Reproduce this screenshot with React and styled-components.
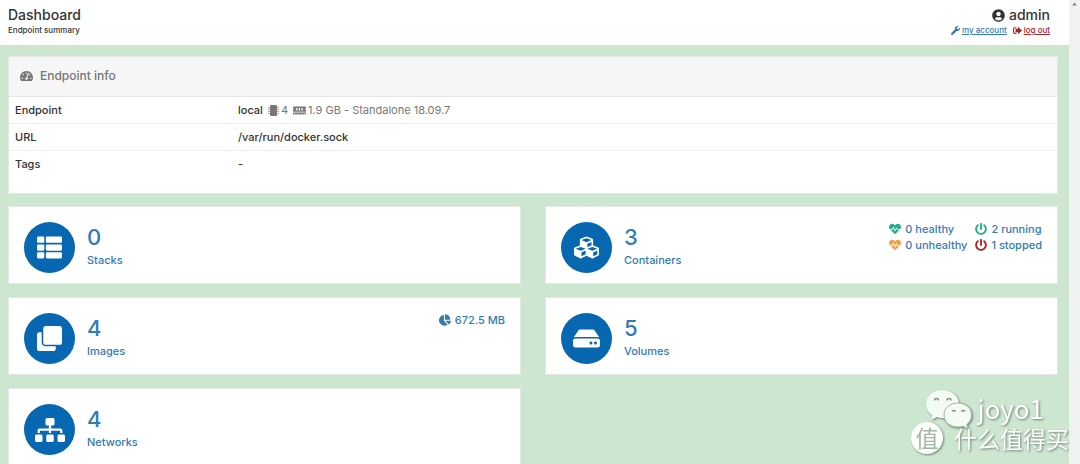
import React from "react";
import styled, { createGlobalStyle } from "styled-components";
import {
  FaChartPie,
  FaClone,
  FaCubes,
  FaHdd,
  FaHeartbeat,
  FaMemory,
  FaMicrochip,
  FaPowerOff,
  FaSitemap,
  FaTachometerAlt,
  FaThList,
  FaUserCircle,
  FaWrench,
} from "react-icons/fa";

const GlobalStyle = createGlobalStyle`
  * {
    box-sizing: border-box;
  }

  body {
    margin: 0;
    font-family: Inter, "Noto Sans CJK SC", sans-serif;
    font-size: 11px;
    font-weight: 500;
    line-height: 16px;
    color: #333;
  }
`;

const Shell = styled.div`
  display: flex;
  height: 100vh;
  overflow: hidden;
`;

const Page = styled.div`
  flex: 1;
  min-width: 0;
  overflow: hidden;
  background-color: #cde6d0;
`;

const ScrollTrack = styled.div`
  width: 11px;
  padding-top: 2px;
  background-color: #f0f1f2;
  display: flex;
  justify-content: center;
`;

const ScrollArrow = styled.svg`
  width: 5px;
  height: 4px;
  fill: #8a8a8a;
`;

const Header = styled.header`
  display: flex;
  justify-content: space-between;
  padding: 6px 19px 9px 8px;
  background-color: #fff;
`;

const Title = styled.h1`
  margin: 0;
  font-size: 14px;
  font-weight: 500;
  line-height: 18px;
`;

const Subtitle = styled.div`
  font-size: 8px;
  line-height: 12px;
`;

const UserBox = styled.div`
  text-align: right;
`;

const UserName = styled.div`
  display: flex;
  justify-content: flex-end;
  align-items: center;
  gap: 4px;
  font-size: 14px;
  line-height: 18px;
`;

const UserLinks = styled.div`
  display: flex;
  justify-content: flex-end;
  gap: 6px;
  font-size: 8px;
  line-height: 12px;
`;

const UserLink = styled.a`
  display: flex;
  align-items: center;
  gap: 2px;
  color: ${(props) => props.$color};
  text-decoration: underline;

  svg {
    width: 9px;
    height: 9px;
  }
`;

const Content = styled.main`
  display: flex;
  flex-direction: column;
  gap: 12px;
  padding: 11px 11px 12px 8px;
`;

const Panel = styled.section`
  padding-bottom: 16px;
  border: 1px solid #e3e9e2;
  background-color: #fff;
`;

const PanelTitle = styled.h2`
  display: flex;
  align-items: center;
  gap: 7px;
  margin: 0;
  padding: 9px 11px 10px;
  border-bottom: 1px solid #e6e6e6;
  background-color: #f6f6f6;
  color: #777;
  font-size: 12px;
  font-weight: 500;
  line-height: 20px;

  svg {
    width: 13px;
    height: 12px;
  }
`;

const InfoTable = styled.table`
  width: 100%;
  border-collapse: collapse;
  table-layout: fixed;
  font-size: 11px;
`;

const Row = styled.tr`
  & + & {
    border-top: 1px solid #efefef;
  }
`;

const Label = styled.th`
  width: 222px;
  padding: 5px 6px;
  font-weight: 500;
  text-align: left;
`;

const Value = styled.td`
  padding: 5px 7px;
`;

const Specs = styled.span`
  margin-left: 5px;
  color: #777;
  font-weight: 400;

  svg {
    width: ${(props) => props.$iconWidth}px;
    height: 11px;
    margin-right: 2px;
    vertical-align: -2px;
  }
`;

const Cards = styled.div`
  display: grid;
  grid-template-columns: 1fr 1fr;
  gap: 13px 24px;
`;

const Card = styled.a`
  display: flex;
  align-items: flex-start;
  gap: 12px;
  padding: 13px 15px 10px;
  border: 1px solid #e3e9e2;
  background-color: #fff;
  color: #337ab7;
  text-decoration: none;
`;

const Circle = styled.span`
  display: flex;
  align-items: center;
  justify-content: center;
  width: 51px;
  height: 51px;
  margin-top: 2px;
  border-radius: 50%;
  background-color: #0767b0;
  color: #fff;

  svg {
    width: ${(props) => props.$iconSize}px;
    height: ${(props) => props.$iconSize}px;
  }
`;

const CardText = styled.span`
  flex: 1;
  display: flex;
  flex-direction: column;
`;

const Count = styled.span`
  font-size: 22px;
  line-height: 34px;
`;

const CardName = styled.span`
  line-height: 13px;
`;

const Stats = styled.span`
  display: grid;
  grid-template-columns: repeat(${(props) => props.$columns}, auto);
  column-gap: 8px;
  padding-top: 1px;
`;

const Stat = styled.span`
  display: flex;
  align-items: center;
  gap: 4px;

  svg {
    width: 12px;
    height: 12px;
    color: ${(props) => props.$color};
  }
`;

const Watermark = styled.div`
  position: fixed;
  right: 11px;
  bottom: 10px;
  display: flex;
  flex-direction: column;
  align-items: flex-end;
  color: #fff;
  font-family: "Noto Sans CJK SC", sans-serif;
  font-weight: 400;
  filter: drop-shadow(1px 1px 1px rgba(70, 90, 75, 0.7));
`;

const WatermarkName = styled.div`
  display: flex;
  align-items: center;
  gap: 5px;
  padding-right: 25px;
  font-size: 26px;
  line-height: 28px;

  svg {
    width: 48px;
    height: 40px;
    margin: -4px 0 -8px;
  }
`;

const WatermarkSite = styled.div`
  display: flex;
  align-items: center;
  gap: 11px;
  font-size: 23px;
  line-height: 32px;
`;

const Seal = styled.span`
  width: 32px;
  height: 32px;
  border-radius: 50%;
  background-color: #fff;
  color: #9fb9a3;
  font-size: 23px;
  line-height: 31px;
  text-align: center;
`;

const SignOutIcon = () => (
  <svg viewBox="0 0 16 16" fill="currentColor" aria-hidden="true">
    <path d="M6 2H3a3 3 0 0 0-3 3v6a3 3 0 0 0 3 3h3v-2H3a1 1 0 0 1-1-1V5a1 1 0 0 1 1-1h3z" />
    <path d="M9 1.500 16 8l-7 6.500V11H4.500V5H9z" />
  </svg>
);

const ChatIcon = () => (
  <svg viewBox="0 0 46 40" aria-hidden="true">
    <path
      fill="#f4fbf5"
      d="M16 0C7 0 0 6 0 14c0 5 2.500 9 6.500 11.500L5 30l6-3c2 .6 3.500 1 6 1 9 0 16-6 16-14S25 0 16 0z"
    />
    <path
      fill="#f4fbf5"
      stroke="#9fb5a3"
      strokeWidth="1"
      d="M32 13c-8 0-14 5-14 12s6 12 14 12c2 0 3.500-.3 5-.8l5 2.600-1.200-4.300C44 32 45.500 29 45.500 25c0-7-6-12-13.500-12z"
    />
    <g fill="none" stroke="#7d9482" strokeWidth="1.500">
      <path d="M8.500 10.500a2 2 0 0 1 4 0M21 10.500a2 2 0 0 1 4 0M26 21.500a2 2 0 0 1 3.500 0M35.500 21.500a2 2 0 0 1 3.500 0" />
    </g>
  </svg>
);

const cards = [
  { name: "Stacks", count: 0, icon: <FaThList />, iconSize: 25 },
  {
    name: "Containers",
    count: 3,
    icon: <FaCubes />,
    iconSize: 25,
    columns: 2,
    stats: [
      { text: "0 healthy", icon: <FaHeartbeat />, color: "#23ae89" },
      { text: "2 running", icon: <FaPowerOff />, color: "#23ae89" },
      { text: "0 unhealthy", icon: <FaHeartbeat />, color: "#f0a04b" },
      { text: "1 stopped", icon: <FaPowerOff />, color: "#ae2323" },
    ],
  },
  {
    name: "Images",
    count: 4,
    icon: <FaClone />,
    iconSize: 25,
    columns: 1,
    stats: [{ text: "672.5 MB", icon: <FaChartPie />, color: "#337ab7" }],
  },
  { name: "Volumes", count: 5, icon: <FaHdd />, iconSize: 27 },
  { name: "Networks", count: 4, icon: <FaSitemap />, iconSize: 30 },
];

const App = () => {
  return (
    <>
      <GlobalStyle />
      <Shell>
        <Page>
          <Header>
            <div>
              <Title>Dashboard</Title>
              <Subtitle>Endpoint summary</Subtitle>
            </div>
            <UserBox>
              <UserName>
                <FaUserCircle size={13} />
                admin
              </UserName>
              <UserLinks>
                <UserLink href="#account" $color="#337ab7">
                  <FaWrench />
                  my account
                </UserLink>
                <UserLink href="#logout" $color="#ae2323">
                  <SignOutIcon />
                  log out
                </UserLink>
              </UserLinks>
            </UserBox>
          </Header>

          <Content>
            <Panel>
              <PanelTitle>
                <FaTachometerAlt />
                Endpoint info
              </PanelTitle>
              <InfoTable>
                <tbody>
                  <Row>
                    <Label scope="row">Endpoint</Label>
                    <Value>
                      local
                      <Specs $iconWidth={11}>
                        <FaMicrochip />4
                      </Specs>
                      <Specs $iconWidth={13}>
                        <FaMemory />
                        1.9 GB - Standalone 18.09.7
                      </Specs>
                    </Value>
                  </Row>
                  <Row>
                    <Label scope="row">URL</Label>
                    <Value>/var/run/docker.sock</Value>
                  </Row>
                  <Row>
                    <Label scope="row">Tags</Label>
                    <Value>-</Value>
                  </Row>
                </tbody>
              </InfoTable>
            </Panel>

            <Cards>
              {cards.map((card) => (
                <Card key={card.name} href={`#${card.name.toLowerCase()}`}>
                  <Circle $iconSize={card.iconSize}>{card.icon}</Circle>
                  <CardText>
                    <Count>{card.count}</Count>
                    <CardName>{card.name}</CardName>
                  </CardText>
                  {card.stats && (
                    <Stats $columns={card.columns}>
                      {card.stats.map((stat) => (
                        <Stat key={stat.text} $color={stat.color}>
                          {stat.icon}
                          {stat.text}
                        </Stat>
                      ))}
                    </Stats>
                  )}
                </Card>
              ))}
            </Cards>
          </Content>
        </Page>
        <ScrollTrack>
          <ScrollArrow viewBox="0 0 5 4">
            <path d="M0 3.500 2.500 0.500 5 3.500z" />
          </ScrollArrow>
        </ScrollTrack>
      </Shell>
      <Watermark>
        <WatermarkName>
          <ChatIcon />
          joyo1
        </WatermarkName>
        <WatermarkSite>
          <Seal>值</Seal>
          什么值得买
        </WatermarkSite>
      </Watermark>
    </>
  );
};

export default App;
